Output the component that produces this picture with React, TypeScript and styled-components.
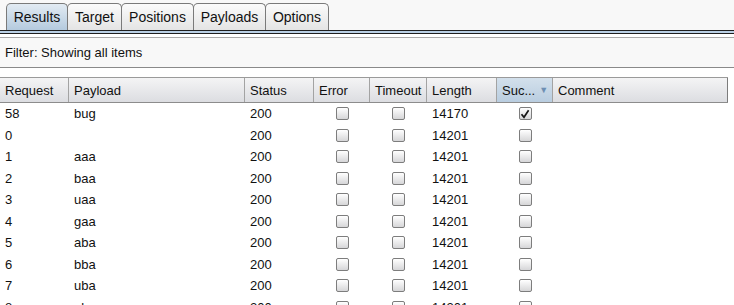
import React from "react";
import styled, { createGlobalStyle } from "styled-components";

const Global = createGlobalStyle`
  html, body { margin: 0; padding: 0; background: #ffffff; }
  body { font-family: "Liberation Sans", Arial, sans-serif; font-size: 13px; color: #111; overflow: hidden; }
`;

const Page = styled.div`
  width: 734px;
  height: 305px;
  overflow: hidden;
  background: #ffffff;
`;

const TabBar = styled.div`
  display: flex;
  align-items: flex-end;
  height: 30px;
  padding-left: 6px;
  background: #f8f8f8;
`;

const Tab = styled.div<{ $active?: boolean; $w: number }>`
  box-sizing: border-box;
  width: ${(p) => p.$w}px;
  height: 27px;
  margin-right: -1px;
  border: 1px solid #7a7a7a;
  border-bottom: none;
  border-radius: 5px 5px 0 0;
  display: flex;
  align-items: center;
  justify-content: center;
  font-size: 14px;
  color: #111;
  background: ${(p) =>
    p.$active
      ? "linear-gradient(#e2ebf3, #b4cade)"
      : "linear-gradient(#fbfbfb, #e4e4e4)"};
`;

const TabRule = styled.div`
  height: 2px;
  border-top: 1px solid #1e1e1e;
  border-bottom: 1px solid #1e1e1e;
  background: #b9cfe4;
`;

const FilterPanel = styled.div`
  margin-top: 3px;
  height: 29px;
  border-top: 1px solid #a8a8a8;
  border-bottom: 1px solid #8a8a8a;
  background: #f8f8f8;
  display: flex;
  align-items: center;
  padding-left: 5px;
  font-size: 13px;
`;

const Table = styled.div`
  margin-top: 9px;
  width: 728px;
`;

const Grid = styled.div`
  display: grid;
  grid-template-columns: 69px 176px 69px 56px 57px 70px 56px 175px;
`;

const HeaderRow = styled(Grid)`
  height: 24px;
  border-top: 1px solid #9a9a9a;
  border-bottom: 1px solid #8c8c8c;
  background: linear-gradient(#f4f4f5, #dcdde1);
`;

const HeadCell = styled.div<{ $sorted?: boolean; $last?: boolean }>`
  display: flex;
  align-items: center;
  gap: 4px;
  padding-left: 5px;
  border-right: 1px solid ${(p) => (p.$last ? "#7c7c7c" : "#a3a3a3")};
  background: ${(p) => (p.$sorted ? "linear-gradient(#d3e0ec, #b9cde0)" : "transparent")};
  font-size: 13px;
  white-space: nowrap;
  overflow: hidden;
`;

const SortArrow = styled.span`
  color: #6d8fb3;
  font-size: 9px;
`;

const Row = styled(Grid)`
  height: 21.5px;
`;

const Cell = styled.div<{ $center?: boolean }>`
  display: flex;
  align-items: center;
  justify-content: ${(p) => (p.$center ? "center" : "flex-start")};
  padding-left: ${(p) => (p.$center ? "0" : "5px")};
  font-size: 13px;
  white-space: nowrap;
`;

const Box = styled.span`
  box-sizing: border-box;
  width: 13px;
  height: 13px;
  border: 1px solid #7d7d7d;
  border-radius: 2px;
  background: linear-gradient(#ffffff, #d6d6d8);
  display: inline-flex;
  align-items: center;
  justify-content: center;
`;

const Check = ({ on }: { on?: boolean }) => (
  <Box>
    {on && (
      <svg width="10" height="10" viewBox="0 0 10 10">
        <path d="M1.5 5.2 L4 8.3 L8.6 1.3" fill="none" stroke="#151515" strokeWidth="1.7" />
      </svg>
    )}
  </Box>
);

const tabs = [
  { label: "Results", w: 62, active: true },
  { label: "Target", w: 55 },
  { label: "Positions", w: 73 },
  { label: "Payloads", w: 73 },
  { label: "Options", w: 64 },
];

const rows = [
  { req: "58", pay: "bug", len: "14170", ok: true },
  { req: "0", pay: "", len: "14201" },
  { req: "1", pay: "aaa", len: "14201" },
  { req: "2", pay: "baa", len: "14201" },
  { req: "3", pay: "uaa", len: "14201" },
  { req: "4", pay: "gaa", len: "14201" },
  { req: "5", pay: "aba", len: "14201" },
  { req: "6", pay: "bba", len: "14201" },
  { req: "7", pay: "uba", len: "14201" },
  { req: "8", pay: "gba", len: "14201" },
];

export default function App() {
  return (
    <Page>
      <Global />
      <TabBar>
        {tabs.map((t) => (
          <Tab key={t.label} $w={t.w} $active={t.active}>
            {t.label}
          </Tab>
        ))}
      </TabBar>
      <TabRule />
      <FilterPanel>Filter: Showing all items</FilterPanel>
      <Table>
        <HeaderRow>
          <HeadCell>Request</HeadCell>
          <HeadCell>Payload</HeadCell>
          <HeadCell>Status</HeadCell>
          <HeadCell>Error</HeadCell>
          <HeadCell>Timeout</HeadCell>
          <HeadCell>Length</HeadCell>
          <HeadCell $sorted>
            Suc...<SortArrow>▼</SortArrow>
          </HeadCell>
          <HeadCell $last>Comment</HeadCell>
        </HeaderRow>
        {rows.map((r) => (
          <Row key={r.req}>
            <Cell>{r.req}</Cell>
            <Cell>{r.pay}</Cell>
            <Cell>200</Cell>
            <Cell $center><Check /></Cell>
            <Cell $center><Check /></Cell>
            <Cell>{r.len}</Cell>
            <Cell $center><Check on={r.ok} /></Cell>
            <Cell />
          </Row>
        ))}
      </Table>
    </Page>
  );
}
